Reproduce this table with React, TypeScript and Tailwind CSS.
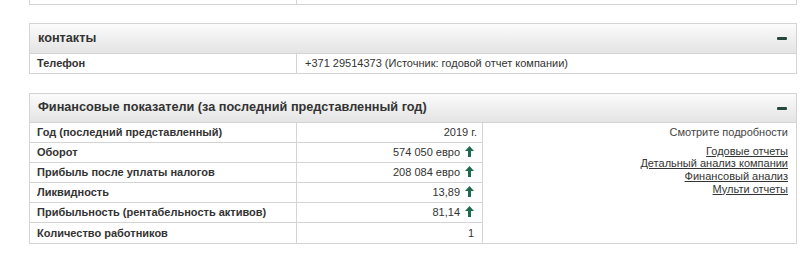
import React from "react";

const Arrow = () => (
  <svg width="9" height="11" viewBox="0 0 9 11" className="inline-block ml-[5px] -mt-[2px]">
    <path d="M4.5 0 L9 5 L6 5 L6 11 L3 11 L3 5 L0 5 Z" fill="#1d6b4c" />
  </svg>
);

const Minus = () => <div className="w-[10px] h-[3px] bg-[#24493b] rounded-[1px]" />;

const Header = ({ title, h }: { title: string; h: string }) => (
  <div className={`${h} flex items-center justify-between pl-[8px] pr-[9px] border-b border-[#d4d4d4] bg-gradient-to-b from-[#fbfbfb] to-[#e4e4e4]`}>
    <span className="text-[12.7px] font-bold text-[#333]">{title}</span>
    <Minus />
  </div>
);

const rows: { label: string; value: string; arrow?: boolean; pr?: string }[] = [
  { label: "Год (последний представленный)", value: "2019 г.", pr: "pr-[5px]" },
  { label: "Оборот", value: "574 050 евро", arrow: true },
  { label: "Прибыль после уплаты налогов", value: "208 084 евро", arrow: true },
  { label: "Ликвидность", value: "13,89", arrow: true },
  { label: "Прибыльность (рентабельность активов)", value: "81,14", arrow: true },
  { label: "Количество работников", value: "1" },
];

export default function App() {
  return (
    <div
      className="w-[800px] h-[256px] bg-white overflow-hidden text-[#333]"
      style={{ fontFamily: '"Liberation Sans", Arial, sans-serif' }}
    >
      <div className="ml-[29px] w-[768px]">
        <div className="h-[5px] flex border-l border-r border-b border-[#d4d4d4]">
          <div className="w-[267px] border-r border-[#d4d4d4]" />
          <div className="flex-1" />
        </div>

        <div className="mt-[18px] border border-[#d4d4d4]">
          <Header title="контакты" h="h-[30px]" />
          <div className="h-[19px] flex items-center text-[11px]">
            <div className="w-[267px] h-full flex items-center pl-[7px] font-bold border-r border-[#d4d4d4]">Телефон</div>
            <div className="pl-[8px]">+371 29514373 (Источник: годовой отчет компании)</div>
          </div>
        </div>

        <div className="mt-[19px] border border-[#d4d4d4]">
          <Header title="Финансовые показатели (за последний представленный год)" h="h-[29px]" />
          <div className="flex">
            <div className="w-[453px] border-r border-[#d4d4d4]">
              {rows.map((r, i) => (
                <div
                  key={r.label}
                  className={`h-[20px] flex text-[11px] ${i < rows.length - 1 ? "border-b border-[#d4d4d4]" : ""}`}
                >
                  <div className="w-[267px] flex items-center pl-[7px] font-bold border-r border-[#d4d4d4]">{r.label}</div>
                  <div className={`flex-1 flex items-center justify-end ${r.pr ?? "pr-[8px]"}`}>
                    <span>{r.value}</span>
                    {r.arrow && <Arrow />}
                  </div>
                </div>
              ))}
            </div>
            <div className="flex-1 flex flex-col items-end pr-[8px] pt-[3px] text-[11px] leading-[12.7px]">
              <div className="text-[#444]">Смотрите подробности</div>
              <div className="mt-[6px] underline">Годовые отчеты</div>
              <div className="underline">Детальный анализ компании</div>
              <div className="underline">Финансовый анализ</div>
              <div className="underline">Мульти отчеты</div>
            </div>
          </div>
        </div>
      </div>
    </div>
  );
}
